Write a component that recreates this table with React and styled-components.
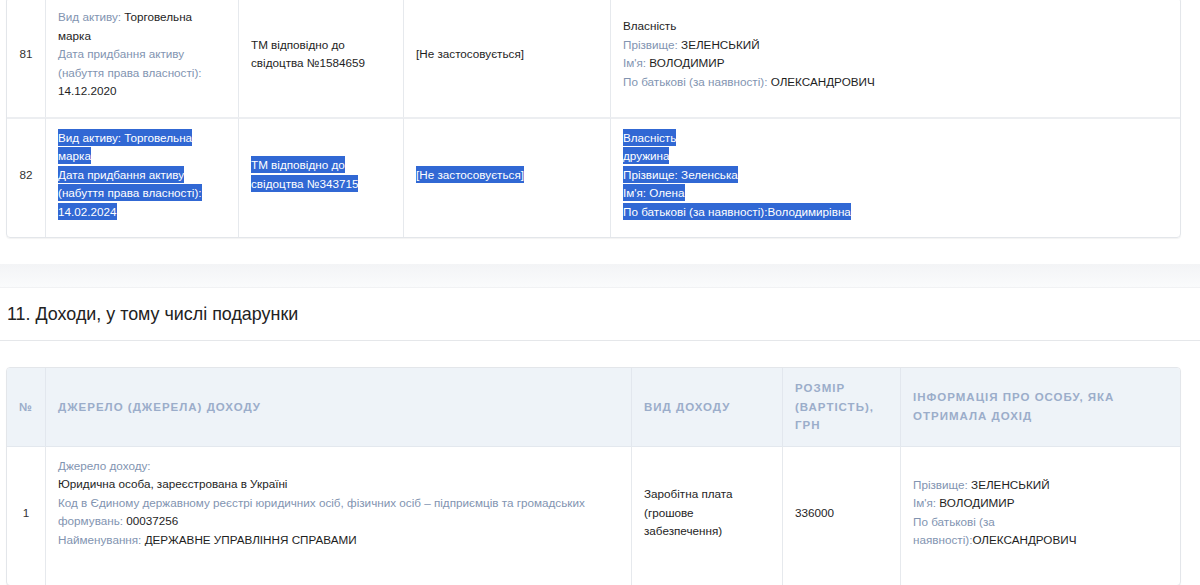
import React from "react";
import styled, { createGlobalStyle } from "styled-components";

const GlobalStyle = createGlobalStyle`
  html, body {
    margin: 0;
    padding: 0;
    background: #fff;
  }
  body {
    font-family: "Liberation Sans", Arial, sans-serif;
    font-size: 11.7px;
    color: #222;
    overflow: hidden;
  }
`;

const assets = [
  {
    n: 81,
    kind: "Торговельна марка",
    date: "14.12.2020",
    desc: "ТМ відповідно до свідоцтва №1584659",
    cost: "[Не застосовується]",
    owner: [
      ["", "Власність"],
      ["Прізвище: ", "ЗЕЛЕНСЬКИЙ"],
      ["Ім'я: ", "ВОЛОДИМИР"],
      ["По батькові (за наявності): ", "ОЛЕКСАНДРОВИЧ"],
    ],
  },
  {
    n: 82,
    selected: true,
    kind: "Торговельна марка",
    date: "14.02.2024",
    desc: "ТМ відповідно до свідоцтва №343715",
    cost: "[Не застосовується]",
    owner: [
      ["", "Власність"],
      ["", "дружина"],
      ["Прізвище: ", "Зеленська"],
      ["Ім'я: ", "Олена"],
      ["По батькові (за наявності):", "Володимирівна"],
    ],
  },
];

const incomeHead = [
  "№",
  "Джерело (джерела) доходу",
  "Вид доходу",
  "Розмір (вартість), грн",
  "Інформація про особу, яка отримала дохід",
];

export default function App() {
  return (
    <>
      <GlobalStyle />
      <Page>
        <Wrap>
          <Table>
            <colgroup>
              <col style={{ width: 39 }} />
              <col style={{ width: 193 }} />
              <col style={{ width: 165 }} />
              <col style={{ width: 207 }} />
              <col />
            </colgroup>
            <tbody>
              {assets.map((a) => (
                <Row key={a.n}>
                  <Num>{a.n}</Num>
                  <Cell>
                    <Item>
                      <Text label="Вид активу: " value={a.kind} sel={a.selected} />
                    </Item>
                    <Item>
                      <Text
                        label="Дата придбання активу (набуття права власності): "
                        value={a.date}
                        sel={a.selected}
                      />
                    </Item>
                  </Cell>
                  <Cell>
                    <Item>
                      <Text value={a.desc} sel={a.selected} />
                    </Item>
                  </Cell>
                  <Cell>
                    <Item>
                      <Text value={a.cost} sel={a.selected} />
                    </Item>
                  </Cell>
                  <Cell>
                    {a.owner.map(([l, v], i) => (
                      <Item key={i}>
                        <Text label={l} value={v} sel={a.selected} />
                      </Item>
                    ))}
                  </Cell>
                </Row>
              ))}
            </tbody>
          </Table>
        </Wrap>

        <Band />
        <SectionHead>11. Доходи, у тому числі подарунки</SectionHead>

        <Wrap $top={26}>
          <Table>
            <colgroup>
              <col style={{ width: 39 }} />
              <col style={{ width: 586 }} />
              <col style={{ width: 151 }} />
              <col style={{ width: 118 }} />
              <col />
            </colgroup>
            <thead>
              <tr>
                {incomeHead.map((h, i) => (
                  <Head key={h} $center={i === 0}>
                    {h}
                  </Head>
                ))}
              </tr>
            </thead>
            <tbody>
              <Row>
                <Num>1</Num>
                <Cell>
                  <Item>
                    <Label>Джерело доходу:</Label>
                  </Item>
                  <Item>Юридична особа, зареєстрована в Україні</Item>
                  <Item>
                    <Label>
                      Код в Єдиному державному реєстрі юридичних осіб, фізичних осіб – підприємців та
                      громадських формувань:{" "}
                    </Label>
                    00037256
                  </Item>
                  <Item $last>
                    <Label>Найменування: </Label>ДЕРЖАВНЕ УПРАВЛІННЯ СПРАВАМИ
                  </Item>
                </Cell>
                <Cell>
                  <Item>Заробітна плата (грошове забезпечення)</Item>
                </Cell>
                <Cell>
                  <Item>336000</Item>
                </Cell>
                <Cell $padRight={40}>
                  <Item>
                    <Label>Прізвище: </Label>ЗЕЛЕНСЬКИЙ
                  </Item>
                  <Item>
                    <Label>Ім'я: </Label>ВОЛОДИМИР
                  </Item>
                  <Item>
                    <Label>По батькові (за наявності):</Label>ОЛЕКСАНДРОВИЧ
                  </Item>
                </Cell>
              </Row>
            </tbody>
          </Table>
        </Wrap>
      </Page>
    </>
  );
}

function Text({ label, value, sel }) {
  if (sel) return <Mark>{(label || "") + value}</Mark>;
  return (
    <>
      {label ? <Label>{label}</Label> : null}
      {value}
    </>
  );
}

const Page = styled.div`
  margin-top: -3px;
`;

const Wrap = styled.div`
  padding: 0 19px 0 6px;
  margin-top: ${(p) => p.$top || 0}px;
`;

const Table = styled.table`
  width: 100%;
  table-layout: fixed;
  border-collapse: separate;
  border-spacing: 0;
  border: 1px solid #e3e6ea;
  border-radius: 4px;
  box-shadow: 0 1px 1px rgba(0, 0, 0, 0.05);
  overflow: hidden;
`;

const Row = styled.tr`
  & + & td {
    border-top: 2px solid #eceef1;
  }
  thead + tbody & td {
    border-top: 1px solid #e3e8ee;
  }
`;

const Cell = styled.td`
  padding: 10px ${(p) => p.$padRight || 12}px 16px 12px;
  vertical-align: middle;
  line-height: 18.5px;
  color: #1e1e1e;
  border-right: 1px solid #e6e9ed;
  &:last-child {
    border-right: none;
  }
`;

const Num = styled(Cell)`
  padding: 10px 0 16px;
  text-align: center;
  color: #333;
`;

const Head = styled.th`
  padding: 11px 12px;
  background: #eef3f8;
  color: #9badca;
  font-size: 11.5px;
  font-weight: bold;
  letter-spacing: 1px;
  text-transform: uppercase;
  text-align: ${(p) => (p.$center ? "center" : "left")};
  line-height: 18.5px;
  vertical-align: middle;
  border-right: 1px solid #e2e7ee;
  &:last-child {
    border-right: none;
  }
  ${(p) => p.$center && "padding: 11px 0;"}
`;

const Item = styled.div`
  margin-bottom: ${(p) => (p.$last ? 20 : 0)}px;
`;

const Label = styled.span`
  color: #8294b1;
`;

const Mark = styled.span`
  background: #3168d4;
  color: #fff;
  padding: 2px 0;
`;

const Band = styled.div`
  height: 23px;
  margin-top: 26px;
  background: linear-gradient(#f3f4f6, #fafbfc);
  border-bottom: 1px solid #f1f2f4;
`;

const SectionHead = styled.div`
  display: flex;
  align-items: center;
  height: 52px;
  padding: 0 7px;
  font-size: 17.9px;
  color: #222;
  border-bottom: 1px solid #e5e7ea;
`;
